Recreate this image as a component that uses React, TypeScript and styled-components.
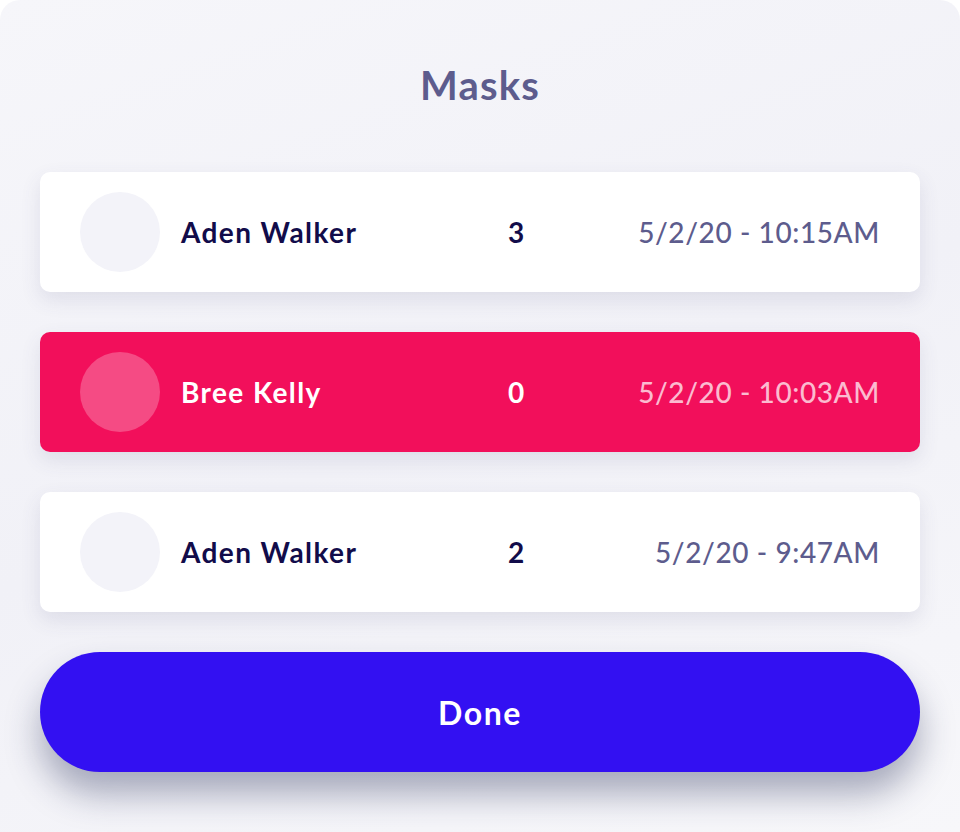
import React from "react";
import styled, { createGlobalStyle } from "styled-components";

const Global = createGlobalStyle`
  html, body { margin: 0; padding: 0; background: #ffffff; }
  body { font-family: Lato, "Open Sans", sans-serif; }
  * { box-sizing: border-box; }
`;

const Sheet = styled.div`
  width: 960px;
  min-height: 832px;
  border-radius: 20px 20px 0 0;
  background: linear-gradient(160deg, #f6f6fa 0%, #f1f1f7 50%, #f7f7fa 100%);
  padding: 58px 40px 60px;
  display: flex;
  flex-direction: column;
`;

const Title = styled.h1`
  margin: 0 0 60px;
  height: 54px;
  text-align: center;
  font-size: 40px;
  line-height: 54px;
  font-weight: 700;
  letter-spacing: 1.2px;
  color: #5d5c8d;
`;

const List = styled.div`
  display: flex;
  flex-direction: column;
  gap: 40px;
`;

const Row = styled.div<{ $active?: boolean }>`
  height: 120px;
  border-radius: 10px;
  background: ${(p) => (p.$active ? "#f20f5b" : "#ffffff")};
  box-shadow: 0 8px 20px rgba(70, 75, 120, 0.12);
  display: grid;
  grid-template-columns: 80px 348px 1fr auto;
  align-items: center;
  padding: 0 40px;
`;

const Avatar = styled.div<{ $active?: boolean }>`
  width: 80px;
  height: 80px;
  border-radius: 50%;
  background: ${(p) => (p.$active ? "rgba(255,255,255,0.25)" : "#f3f3f9")};
`;

const Name = styled.div<{ $active?: boolean }>`
  padding-left: 21px;
  font-size: 28px;
  font-weight: 700;
  letter-spacing: 1.4px;
  color: ${(p) => (p.$active ? "#ffffff" : "#120c4a")};
`;

const Count = styled.div<{ $active?: boolean }>`
  font-size: 28px;
  font-weight: 700;
  color: ${(p) => (p.$active ? "#ffffff" : "#120c4a")};
`;

const Stamp = styled.div<{ $active?: boolean }>`
  font-size: 28px;
  font-weight: 500;
  letter-spacing: 0.6px;
  text-align: right;
  color: ${(p) => (p.$active ? "rgba(255,255,255,0.72)" : "#5d5c8d")};
`;

const DoneButton = styled.button`
  margin-top: 40px;
  height: 120px;
  width: 100%;
  border: none;
  border-radius: 60px;
  background: #3310f2;
  color: #ffffff;
  font-family: Lato, "Open Sans", sans-serif;
  font-size: 32px;
  font-weight: 700;
  letter-spacing: 1.6px;
  box-shadow: 0 22px 34px rgba(40, 48, 90, 0.38);
  cursor: pointer;
`;

const rows = [
  { name: "Aden Walker", count: 3, stamp: "5/2/20 - 10:15AM", active: false },
  { name: "Bree Kelly", count: 0, stamp: "5/2/20 - 10:03AM", active: true },
  { name: "Aden Walker", count: 2, stamp: "5/2/20 - 9:47AM", active: false },
];

export default function App() {
  return (
    <>
      <Global />
      <Sheet>
        <Title>Masks</Title>
        <List>
          {rows.map((r, i) => (
            <Row key={i} $active={r.active}>
              <Avatar $active={r.active} />
              <Name $active={r.active}>{r.name}</Name>
              <Count $active={r.active}>{r.count}</Count>
              <Stamp $active={r.active}>{r.stamp}</Stamp>
            </Row>
          ))}
        </List>
        <DoneButton>Done</DoneButton>
      </Sheet>
    </>
  );
}
